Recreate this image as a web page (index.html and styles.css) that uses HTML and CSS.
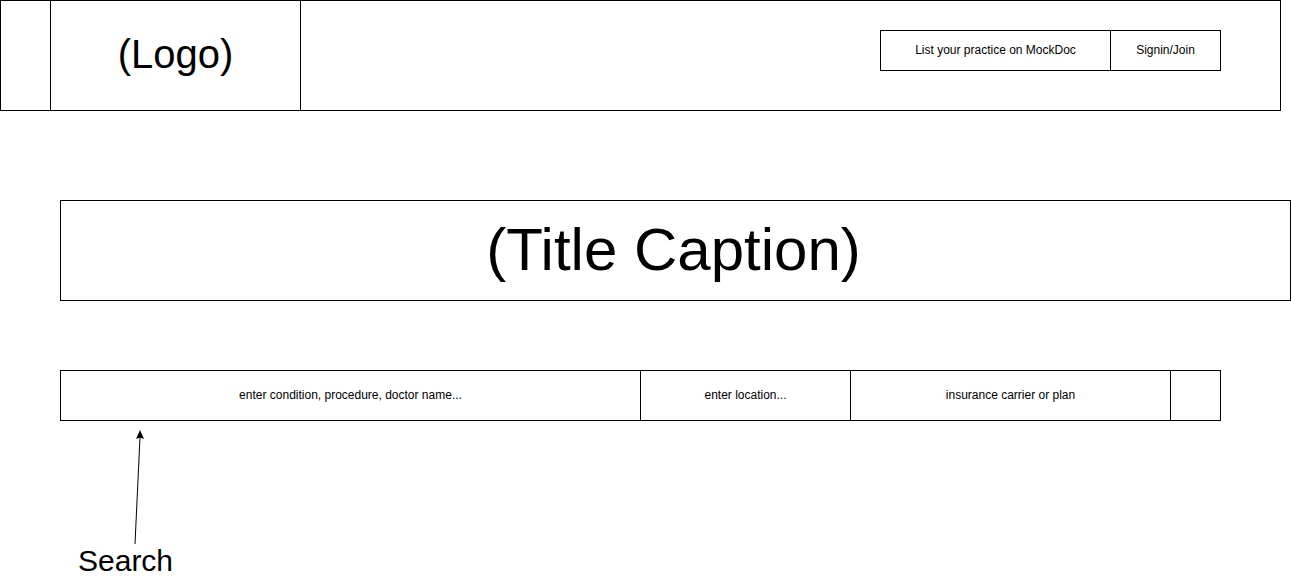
FILE: index.html
```html
<!DOCTYPE html>
<html>
<head>
<meta charset="utf-8">
<link rel="stylesheet" href="styles.css">
</head>
<body>
  <header class="header">
    <div class="cell cell-menu"></div>
    <div class="cell cell-logo">(Logo)</div>
    <div class="cell cell-nav">
      <div class="nav-group">
        <div class="nav-btn nav-list">List your practice on MockDoc</div>
        <div class="nav-btn nav-sign">Signin/Join</div>
      </div>
    </div>
  </header>

  <section class="title">(Title Caption)</section>

  <div class="search">
    <div class="field field-query">enter condition, procedure, doctor name...</div>
    <div class="field field-loc">enter location...</div>
    <div class="field field-ins">insurance carrier or plan</div>
    <div class="field field-go"></div>
  </div>

  <div class="note">
    <svg class="note-arrow" width="20" height="116" viewBox="0 0 20 116">
      <line x1="7" y1="115" x2="12" y2="8" stroke="#000" stroke-width="1"/>
      <polygon points="12,1 8,10 12,8.5 16,10" fill="#000"/>
    </svg>
    <div class="note-label">Search</div>
  </div>
</body>
</html>
```

FILE: styles.css
```css
* {
  box-sizing: border-box;
}

body {
  margin: 0;
  font-family: "Liberation Sans", Arial, Helvetica, sans-serif;
  color: #000;
  background: #fff;
}

.header {
  display: flex;
  width: 1281px;
  height: 111px;
  border: 1px solid #000;
}

.cell {
  height: 100%;
}

.cell-menu {
  width: 50px;
  border-right: 1px solid #000;
}

.cell-logo {
  width: 250px;
  border-right: 1px solid #000;
  display: flex;
  align-items: center;
  justify-content: center;
  font-size: 40px;
  padding-bottom: 2px;
}

.cell-nav {
  flex: 1;
  display: flex;
  justify-content: flex-end;
  align-items: flex-start;
  padding-top: 29px;
  padding-right: 59px;
}

.nav-group {
  display: flex;
  height: 41px;
  border: 1px solid #000;
}

.nav-btn {
  display: flex;
  align-items: center;
  justify-content: center;
  font-size: 12px;
  padding-bottom: 2px;
}

.nav-list {
  width: 230px;
  border-right: 1px solid #000;
}

.nav-sign {
  width: 109px;
}

.title {
  margin-top: 89px;
  margin-left: 60px;
  width: 1231px;
  height: 101px;
  border: 1px solid #000;
  display: flex;
  align-items: center;
  justify-content: center;
  font-size: 60px;
  padding-bottom: 2px;
  padding-right: 4px;
}

.search {
  margin-top: 69px;
  margin-left: 60px;
  width: 1161px;
  height: 51px;
  border: 1px solid #000;
  display: flex;
}

.field {
  display: flex;
  align-items: center;
  justify-content: center;
  font-size: 12px;
  padding-bottom: 2px;
  border-right: 1px solid #000;
}

.field-query { width: 580px; }
.field-loc { width: 210px; }
.field-ins { width: 320px; }
.field-go { flex: 1; border-right: none; }

.note {
  margin-top: 8px;
}

.note-arrow {
  display: block;
  margin-left: 128px;
}

.note-label {
  margin-left: 78px;
  font-size: 30px;
  line-height: 30px;
  margin-top: 1px;
}
```
